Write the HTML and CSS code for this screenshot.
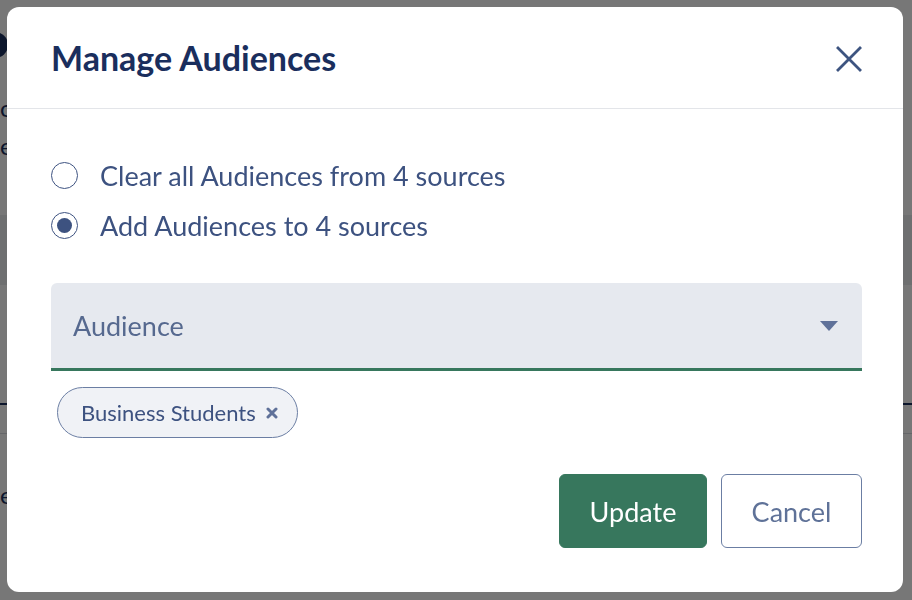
FILE: index.html
```html
<!DOCTYPE html>
<html lang="en">
<head>
<meta charset="utf-8">
<title>Manage Audiences</title>
<link rel="stylesheet" href="styles.css">
</head>
<body>
<div class="page">
  <div class="avatar"></div>
  <p class="bg-text first">open</p>
  <p class="bg-text">edit</p>
  <div class="bg-band"></div>
  <div class="bg-rule"></div>
  <div class="bg-rule light"></div>
  <p class="bg-text third">entry</p>
</div>

<div class="overlay">
  <div class="modal" role="dialog" aria-labelledby="modal-title">
    <header class="modal-header">
      <h1 id="modal-title" class="modal-title">Manage Audiences</h1>
      <button class="close-btn" aria-label="Close">
        <svg width="26" height="26" viewBox="0 0 26 26" aria-hidden="true">
          <path d="M2 2 L24 24 M24 2 L2 24" stroke="#3d5480" stroke-width="2.8" stroke-linecap="square" fill="none"/>
        </svg>
      </button>
    </header>
    <div class="modal-body">
      <label class="radio-row">
        <span class="radio"></span>
        <span class="radio-label">Clear all Audiences from 4 sources</span>
      </label>
      <label class="radio-row">
        <span class="radio checked"></span>
        <span class="radio-label">Add Audiences to 4 sources</span>
      </label>

      <div class="select">
        <span class="select-placeholder">Audience</span>
        <span class="caret"></span>
      </div>

      <div class="chips">
        <span class="chip">Business Students
          <svg class="chip-x" width="12" height="12" viewBox="0 0 12 12" aria-hidden="true">
            <path d="M2 2 L10 10 M10 2 L2 10" stroke="#5f7199" stroke-width="3" stroke-linecap="round" fill="none"/>
          </svg>
        </span>
      </div>

      <div class="actions">
        <button class="btn btn-primary">Update</button>
        <button class="btn btn-secondary">Cancel</button>
      </div>
    </div>
  </div>
</div>
</body>
</html>
```

FILE: styles.css
```css
* { box-sizing: border-box; }

html, body {
  margin: 0;
  width: 912px;
  height: 600px;
  overflow: hidden;
}

body {
  font-family: "Lato", "Noto Sans", sans-serif;
  background: #ffffff;
  color: #3d5280;
}

/* underlying page (dimmed by overlay) */
.page {
  padding: 32px 0 0 0;
}
.avatar {
  width: 26px;
  height: 26px;
  border-radius: 50%;
  background: #1b2f5e;
  margin-left: -18px;
}
.bg-text {
  margin: 0;
  font-size: 24px;
  line-height: 38px;
  color: #1b2f5e;
}
.bg-text.first { margin-top: 31px; }
.bg-text.third { margin-top: 42px; }
.bg-band {
  margin-top: 50px;
  height: 70px;
  background: #eceef1;
}
.bg-rule {
  margin-top: 118px;
  height: 2px;
  background: #1b2f5e;
}
.bg-rule.light {
  margin-top: 28px;
  height: 1px;
  background: #d8dbe0;
}

.overlay {
  position: fixed;
  inset: 0;
  background: rgba(0, 0, 0, 0.535);
  display: flex;
  align-items: flex-start;
  padding: 7px 0 0 7px;
}

.modal {
  width: 896px;
  height: 585px;
  background: #ffffff;
  border-radius: 12px;
  display: flex;
  flex-direction: column;
}

.modal-header {
  height: 102px;
  flex: none;
  border-bottom: 1px solid #e3e5e9;
  padding: 0 41px 0 44px;
  display: flex;
  align-items: center;
  justify-content: space-between;
}

.modal-title {
  margin: 0;
  font-size: 34px;
  font-weight: 700;
  color: #1a2e5d;
  line-height: 40px;
}

.close-btn {
  border: 0;
  background: none;
  padding: 0;
  width: 26px;
  height: 26px;
  display: flex;
  margin-top: 3px;
  cursor: pointer;
}

.modal-body {
  padding: 48px 41px 0 44px;
  display: flex;
  flex-direction: column;
}

.radio-row {
  display: flex;
  align-items: center;
  height: 36px;
  margin-bottom: 14px;
  gap: 22px;
}

.radio {
  width: 27px;
  height: 27px;
  border-radius: 50%;
  border: 1.5px solid #3d5280;
  display: flex;
  align-items: center;
  justify-content: center;
  flex: none;
}
.radio.checked::after {
  content: "";
  width: 15px;
  height: 15px;
  border-radius: 50%;
  background: #3d5280;
}

.radio-label {
  font-size: 27px;
  color: #3d5280;
}

.select {
  margin-top: 26px;
  height: 88px;
  background: #e6e9ef;
  border-bottom: 3px solid #37775d;
  border-radius: 6px 6px 0 0;
  padding: 0 24px 0 22px;
  display: flex;
  align-items: center;
  justify-content: space-between;
}
.select-placeholder {
  font-size: 27px;
  color: #56698f;
}
.caret {
  width: 0;
  height: 0;
  border-left: 9px solid transparent;
  border-right: 9px solid transparent;
  border-top: 10px solid #5f7199;
}

.chips {
  margin-top: 16px;
  padding-left: 6px;
  display: flex;
}
.chip {
  height: 51px;
  border: 1px solid #6b7ea3;
  border-radius: 26px;
  background: #f0f2f6;
  padding: 0 19px 0 23px;
  display: flex;
  align-items: center;
  gap: 10px;
  font-size: 22px;
  color: #3d5280;
}
.chip-x {
  flex: none;
}

.actions {
  margin-top: 36px;
  display: flex;
  justify-content: flex-end;
  gap: 14px;
}
.btn {
  height: 74px;
  border-radius: 6px;
  font-family: inherit;
  font-size: 27px;
  cursor: pointer;
}
.btn-primary {
  width: 148px;
  background: #37775d;
  border: 1px solid #37775d;
  color: #ffffff;
}
.btn-secondary {
  width: 141px;
  background: #ffffff;
  border: 1px solid #6b7ea3;
  color: #5f7298;
}
```
